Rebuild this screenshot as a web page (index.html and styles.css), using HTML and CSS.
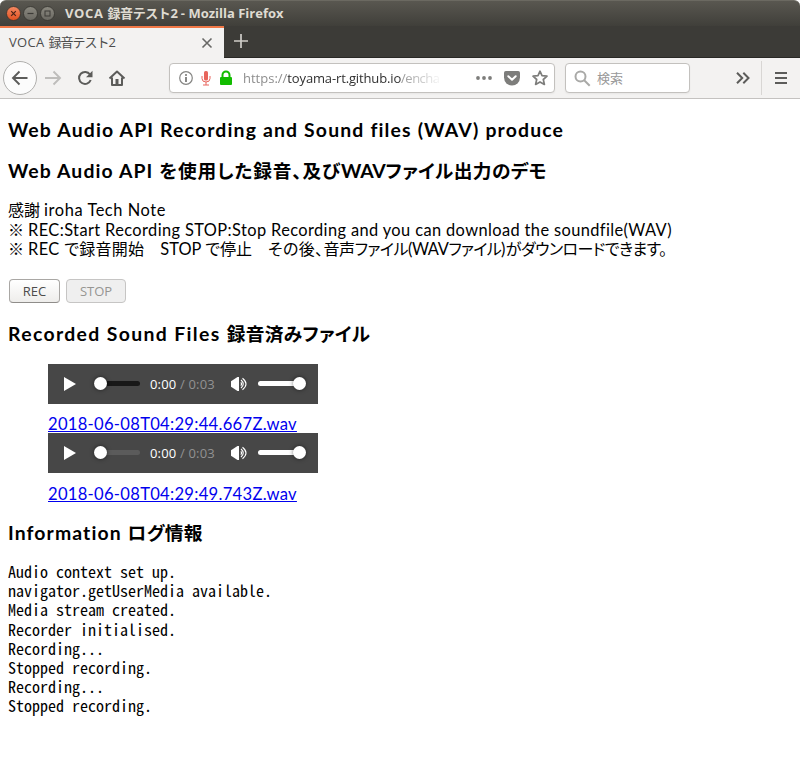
FILE: index.html
```html
<!DOCTYPE html>
<html lang="ja">
<head>
<meta charset="utf-8">
<title>VOCA 録音テスト2</title>
<link rel="stylesheet" href="styles.css">
</head>
<body>
<header class="titlebar">
  <svg class="wm" width="52" height="16" viewBox="0 0 52 16">
    <defs><linearGradient id="o" x2="0" y2="1"><stop stop-color="#f58a63"/><stop offset="1" stop-color="#e2501f"/></linearGradient><linearGradient id="g" x2="0" y2="1"><stop stop-color="#8b8980"/><stop offset="1" stop-color="#6a6861"/></linearGradient></defs>
    <circle cx="9.500" cy="7.500" r="7" fill="url(#o)" stroke="#34322d" stroke-width=".8"/><path d="M7.200 5.200l4.600 4.600m0-4.600l-4.600 4.600" stroke="#4a2418" stroke-width="1.200"/>
    <circle cx="26.500" cy="7.500" r="7" fill="url(#g)" stroke="#34322d" stroke-width=".8"/><path d="M23.500 7.500h6" stroke="#3c3b37" stroke-width="1.200"/>
    <circle cx="43.500" cy="7.500" r="7" fill="url(#g)" stroke="#34322d" stroke-width=".8"/><rect x="41" y="5" width="5" height="5" fill="none" stroke="#3c3b37"/>
  </svg>
  <span class="wtitle"><span class="t1">VOCA </span><span class="t2">録音テスト2</span><span class="t3"> - Mozilla Firefox</span></span>
</header>
<nav class="tabs">
  <div class="tab"><span class="tabname"><span class="t4">VOCA </span><span class="t5">録音テスト2</span></span>
    <svg width="12" height="12" viewBox="0 0 12 12"><path d="M1.500 1.500l9 9m0-9l-9 9" stroke="#686866" stroke-width="1.600"/></svg></div>
  <svg class="plus" width="16" height="16" viewBox="0 0 16 16"><path d="M8 1v14M1 8h14" stroke="#cfcdc8" stroke-width="1.700"/></svg>
</nav>
<div class="toolbar">
  <span class="back"><svg width="18" height="16" viewBox="0 0 18 16"><path d="M16.500 8H2M8.500 1.500L2 8l6.500 6.500" fill="none" stroke="#5c5c5a" stroke-width="1.900"/></svg></span>
  <svg class="fwd" width="18" height="16" viewBox="0 0 18 16"><path d="M1 8h15M9.500 1.500L16 8l-6.500 6.500" fill="none" stroke="#bebdbb" stroke-width="1.900"/></svg>
  <svg class="reload" width="16" height="16" viewBox="0 0 16 16"><path d="M13 4.500A6 6 0 1 0 13.700 10" fill="none" stroke="#5c5c5a" stroke-width="2"/><path d="M15.500 .8v6.400H9z" fill="#5c5c5a"/></svg>
  <svg class="home" width="18" height="16" viewBox="0 0 18 16"><path d="M1.500 8.500L9 1.500l7.500 7M4 7.500V15h10V7.500" fill="none" stroke="#5c5c5a" stroke-width="2" stroke-linejoin="round"/><path d="M7.500 9h3v6h-3z" fill="#5c5c5a"/></svg>
  <div class="url">
    <svg width="14" height="14" viewBox="0 0 14 14"><circle cx="7" cy="7" r="6.300" fill="none" stroke="#858583" stroke-width="1.200"/><path d="M7 6v5" stroke="#737371" stroke-width="1.700"/><circle cx="7" cy="3.900" r="1" fill="#737371"/></svg>
    <svg class="mic" width="10" height="16" viewBox="0 0 10 16"><rect x="3" y="1" width="4" height="9.500" rx="1.600" fill="#e8655c"/><path d="M1 6v2.500a4 3.500 0 0 0 8 0V6M5 12v3M2 15h6" fill="none" stroke="#e8655c"/></svg>
    <svg class="lock" width="14" height="16" viewBox="0 0 14 16"><path d="M3.500 8V5a3.500 3.500 0 0 1 7 0v3" fill="none" stroke="#12bc00" stroke-width="2"/><rect x="1" y="7" width="12" height="8" rx="1" fill="#12bc00"/></svg>
    <span class="addr">https://<b>toyama-rt.github.io</b><span class="path">/encha</span></span>
    <svg class="dots" width="16" height="6" viewBox="0 0 16 6"><g fill="#7d7d7b"><circle cx="2" cy="3" r="1.900"/><circle cx="8" cy="3" r="1.900"/><circle cx="14" cy="3" r="1.900"/></g></svg>
    <svg class="pocket" width="16" height="15" viewBox="0 0 16 15"><path d="M1.800 0h12.400Q16 0 16 1.800V6.500A8 8 0 0 1 0 6.500V1.800Q0 0 1.800 0z" fill="#7d7d7b"/><path d="M4.300 5.200L8 8.700l3.700-3.500" fill="none" stroke="#fff" stroke-width="2" stroke-linecap="round" stroke-linejoin="round"/></svg>
    <svg class="star" width="16" height="16" viewBox="0 0 16 16"><path d="M8 1.200l2 4.500 5 .5-3.700 3.300 1.100 4.900L8 11.900l-4.400 2.500 1.100-4.900L1 6.200l5-.5z" fill="none" stroke="#7d7d7b" stroke-width="1.700" stroke-linejoin="round"/></svg>
  </div>
  <div class="search"><svg width="17" height="17" viewBox="0 0 17 17"><circle cx="6.500" cy="6.500" r="5" fill="none" stroke="#a9a9a7" stroke-width="2"/><path d="M10.200 10.200l5.500 5.500" stroke="#a9a9a7" stroke-width="2"/></svg><span>検索</span></div>
  <svg class="more" width="14" height="12" viewBox="0 0 14 12"><path d="M1 .8L6.200 6 1 11.200M7.300 .8L12.500 6l-5.200 5.200" fill="none" stroke="#5c5c5a" stroke-width="2"/></svg>
  <span class="sep"></span>
  <svg class="menu" width="12" height="12" viewBox="0 0 12 12"><path d="M0 1h12M0 6h12M0 11h12" stroke="#5c5c5a" stroke-width="2"/></svg>
</div>
<main>
  <h3><span class="a1">Web Audio API Recording and Sound files (WAV) produce</span></h3>
  <h3><span class="b1">Web Audio API </span><span class="b2">を使用した録音、及び</span><span class="b3">WAV</span><span class="b4">ファイル出力のデモ</span></h3>
  <p><span class="c1">感謝 </span><span class="c2">iroha Tech Note</span><br>
  <span class="c3">※ </span><span class="c4">REC:Start Recording STOP:Stop Recording and you can download the soundfile(WAV)</span><br>
  <span class="c3">※ </span><span class="d1">REC </span><span class="d2">で録音開始　</span><span class="d3">STOP </span><span class="d4">で停止　</span><span class="d5">その後、</span><span class="d6">音声ファイル</span><span class="d7">(WAV</span><span class="d8">ファイル</span><span class="d9">)</span><span class="d10">がダウンロードできます。</span></p>
  <div class="buttons"><button class="rec">REC</button><button class="stop" disabled>STOP</button></div>
  <h3 class="files"><span class="e1">Recorded Sound Files </span><span class="e2">録音済みファイル</span></h3>
  <ul>
    <li><div class="player">
      <svg width="12" height="14" viewBox="0 0 12 14"><path d="M0 0l12 7-12 7z" fill="#fff"/></svg>
      <span class="scrub played"><i></i></span>
      <span class="time">0:00<em> / 0:03</em></span>
      <svg class="vol" width="17" height="14" viewBox="0 0 17 14"><path d="M0 4.500q0-.5.800-.7L6.500 0H8v14H6.500L.8 10.200Q0 10 0 9.500z" fill="#fff"/><path d="M9.800 5.300q1.600 1.700 0 3.400M10 3q4.500 4 0 8M11.500 1.300q7 5.700 0 11.400" fill="none" stroke="#fff" stroke-width="1.100"/></svg>
      <span class="level"><i></i></span></div>
      <a href="#">2018-06-08T04:29:44.667Z.wav</a></li>
    <li><div class="player">
      <svg width="12" height="14" viewBox="0 0 12 14"><path d="M0 0l12 7-12 7z" fill="#fff"/></svg>
      <span class="scrub"><i></i></span>
      <span class="time">0:00<em> / 0:03</em></span>
      <svg class="vol" width="17" height="14" viewBox="0 0 17 14"><path d="M0 4.500q0-.5.800-.7L6.500 0H8v14H6.500L.8 10.200Q0 10 0 9.500z" fill="#fff"/><path d="M9.800 5.300q1.600 1.700 0 3.400M10 3q4.500 4 0 8M11.500 1.300q7 5.700 0 11.400" fill="none" stroke="#fff" stroke-width="1.100"/></svg>
      <span class="level"><i></i></span></div>
      <a href="#">2018-06-08T04:29:49.743Z.wav</a></li>
  </ul>
  <h3 class="info"><span class="f1">Information </span><span class="f2">ログ情報</span></h3>
  <pre>Audio context set up.
navigator.getUserMedia available.
Media stream created.
Recorder initialised.
Recording...
Stopped recording.
Recording...
Stopped recording.</pre>
</main>
</body>
</html>
```
FILE: styles.css
```css
* { box-sizing: border-box; }
body { margin: 0; width: 800px; height: 763px; overflow: hidden; background: #fff; color: #000; font-family: Lato, "Noto Sans CJK JP", sans-serif; }
svg { display: block; flex: none; }
.titlebar { height: 26px; display: flex; align-items: center; background: linear-gradient(#595750, #403f3a); border-top: 1px solid #6b6961; border-radius: 6px 6px 0 0; padding-left: 4px; }
.wm { margin-right: 9px; }
.wtitle { margin-top: -1px; font: bold 13px/24px "Open Sans", "Noto Sans CJK JP", sans-serif; color: #dfdbd2; white-space: pre; }
.t1 { letter-spacing: .6px; }
.t2 { letter-spacing: -.4px; }
.tabs { height: 32px; display: flex; background: #3c3b37; border-bottom: 1px solid #292825; }
.tab { width: 224px; height: 32px; background: #f3f2f1; border-top: 2px solid #f07746; display: flex; justify-content: space-between; align-items: center; padding: 0 11px 0 9px; }
.tabname { margin-top: -3px; font: 13px/20px "Open Sans", "Noto Sans CJK JP", sans-serif; color: #4c4c4c; white-space: pre; }
.t4 { letter-spacing: .35px; }
.t5 { letter-spacing: -1px; }
.plus { margin: 7px 0 0 9px; }
.toolbar { height: 41px; display: flex; align-items: center; background: #f3f2f1; border-bottom: 1px solid #c4c2c0; padding-left: 3px; }
.back { width: 34px; height: 34px; border: 1px solid #b0afad; border-radius: 50%; background: #fcfcfc; display: flex; align-items: center; justify-content: center; }
.fwd { margin-left: 7px; }
.reload { margin-left: 15px; }
.home { margin-left: 15px; }
.url, .search { height: 30px; border: 1px solid #c3c1be; border-radius: 4px; background: #fff; display: flex; align-items: center; box-shadow: 0 1px 2px #0000000d; }
.url { width: 386px; margin-left: 43px; padding-left: 9px; }
.mic { margin-left: 8px; }
.lock { margin-left: 8px; }
.addr { width: 198px; margin-left: 10px; white-space: nowrap; font: 13px/20px "Open Sans", sans-serif; color: #8e8e8e; -webkit-mask-image: linear-gradient(90deg, #000 155px, transparent 200px); mask-image: linear-gradient(90deg, #000 155px, transparent 200px); }
.addr b { font-weight: 400; color: #303030; letter-spacing: -.14px; }
.path { letter-spacing: -.5px; }
.dots { margin-left: 35px; }
.pocket { margin-left: 12px; }
.star { margin-left: 12px; }
.search { width: 125px; margin-left: 10px; padding-left: 8px; }
.search span { margin-left: 6px; font: 13px/20px "Noto Sans CJK JP", sans-serif; color: #999; }
.more { margin-left: 46px; }
.sep { width: 1px; height: 34px; background: #d8d6d4; margin-left: 11px; }
.menu { margin-left: 13px; }
main { padding: 19px 8px 0; }
h3 { margin: 0 0 17px; font-size: 18.72px; line-height: 24px; font-weight: 700; white-space: pre; }
h3, p { font-feature-settings: "palt"; }
.a1, .b1, .b3, .e1, .f1 { font-size: 19.4px; line-height: 20px; letter-spacing: 1.1px; }
.a1 { letter-spacing: 1.16px; }
.b2 { letter-spacing: .85px; }
.b3 { letter-spacing: -.3px; }
.b4 { letter-spacing: .4px; }
p { margin: 0; font-size: 16px; line-height: 19.5px; white-space: nowrap; }
p span { white-space: pre; }
.c2, .c4, .d1, .d3, .d7, .d9 { font-size: 16.4px; line-height: 16px; letter-spacing: .39px; }
.c2 { letter-spacing: .57px; }
.d2 { letter-spacing: .2px; }
.d3 { letter-spacing: .05px; }
.d5 { letter-spacing: .4px; }
.d6 { letter-spacing: -.5px; }
.d7 { letter-spacing: -.4px; }
.d8 { letter-spacing: -.7px; }
.d10 { letter-spacing: -.55px; }
.buttons { display: flex; gap: 6px; margin: 20px 0 0 1px; }
button { height: 24px; padding: 0; border: 1px solid #a9a7a4; border-radius: 4px; font: 13px/20px "Open Sans", sans-serif; }
.rec { width: 51px; background: linear-gradient(#fff, #eeedeb); color: #4c4c4c; border-bottom-color: #8f8d8a; }
.stop { width: 60px; background: #efefef; color: #969592; border-color: #c6c5c4; }
.files { margin: 19px 0 18px; }
.e1 { letter-spacing: 1.36px; }
.e2, .f2 { letter-spacing: .3px; }
ul { list-style: none; margin: 0; padding: 0 0 0 40px; }
li { height: 69px; }
li + li { height: 70px; }
li + li a { margin-top: 11px; }
.player { width: 270px; height: 40px; background: #474747; display: flex; align-items: center; padding-left: 16px; }
.scrub, .level { position: relative; height: 5px; border-radius: 3px; }
.scrub { width: 46px; margin-left: 18px; background: #5b5b5b; }
.scrub.played { background: #181818; }
.level { width: 46px; margin-left: 10px; background: #fff; }
.scrub i, .level i { position: absolute; top: -4px; width: 13px; height: 13px; border-radius: 50%; background: #fff; box-shadow: 0 0 4px #0008; }
.scrub i { left: 0; }
.level i { right: -2px; }
.time { width: 66px; margin-left: 10px; font: 13px/20px "Open Sans", sans-serif; letter-spacing: .18px; color: #fff; white-space: pre; }
.time em { font-style: normal; color: #929292; }
.vol { margin-left: 15px; }
a { display: block; font-size: 16.6px; line-height: 20px; letter-spacing: .28px; margin-top: 10px; color: #0000ee; }
.info { margin: 18px 0 17px; }
pre { margin: 0; padding-top: .5px; font: 16px/19.2px "Noto Sans Mono CJK JP", "Liberation Mono", monospace; }
```
